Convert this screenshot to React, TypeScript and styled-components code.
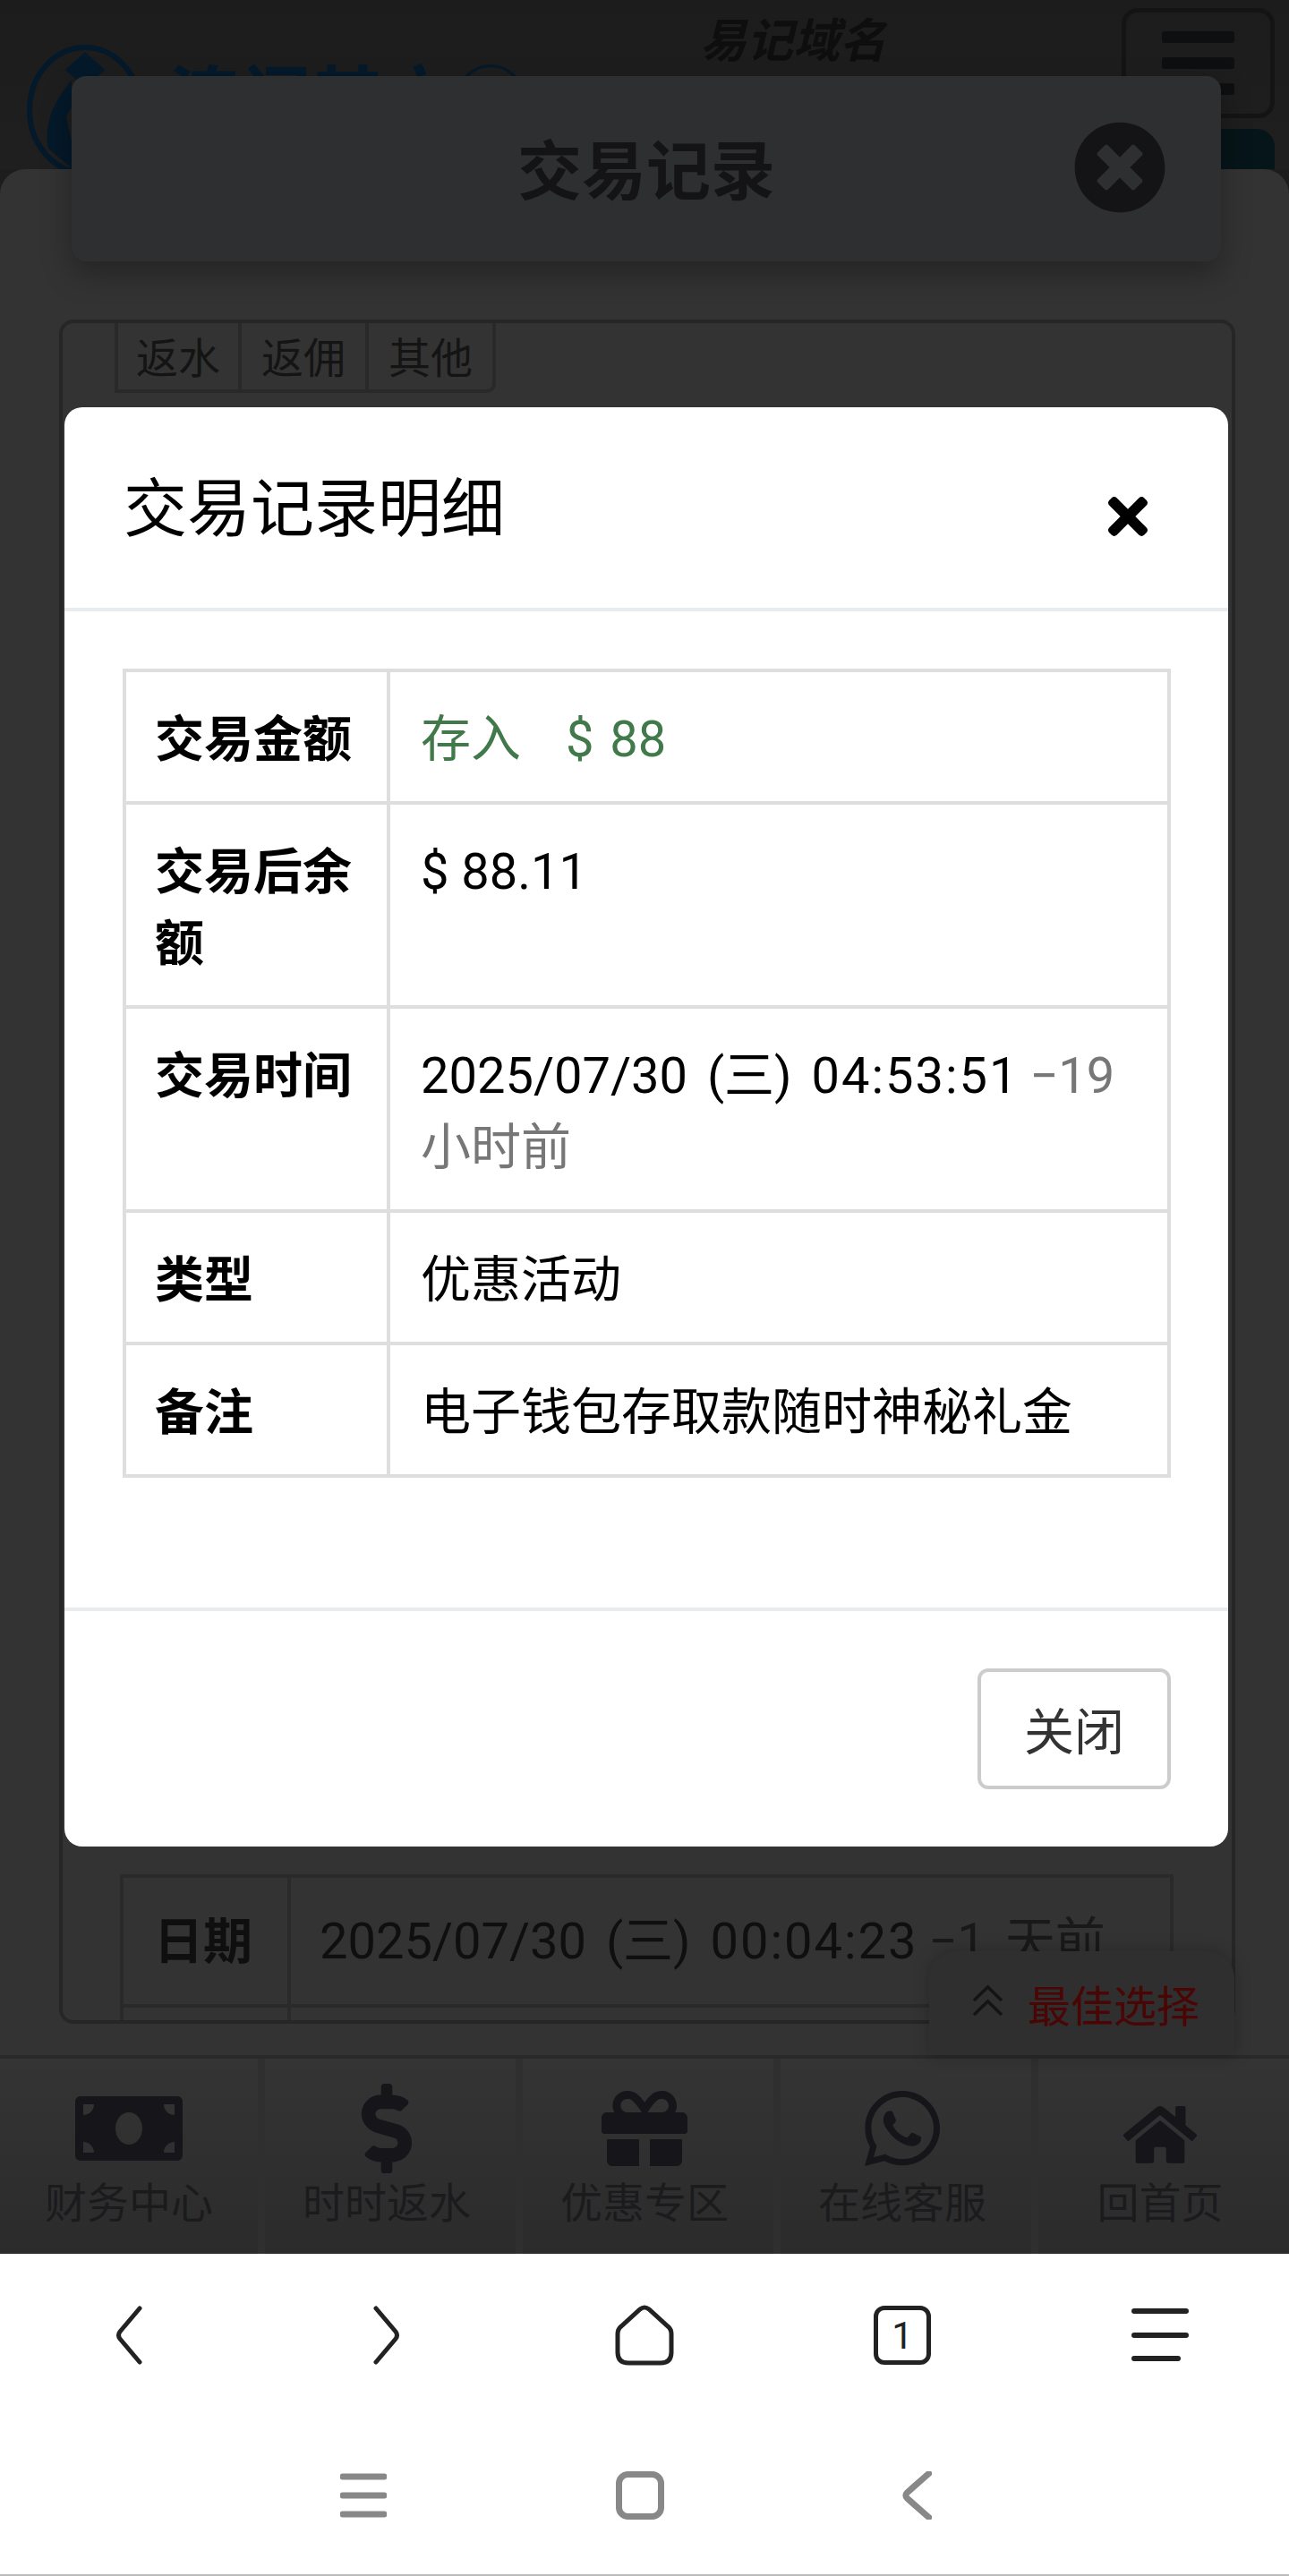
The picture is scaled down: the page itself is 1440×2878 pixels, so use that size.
import * as React from 'react'

import styled, { createGlobalStyle } from 'styled-components'
import { FaDollarSign, FaGift, FaHome, FaMoneyBill, FaTimes, FaTimesCircle, FaWhatsapp } from 'react-icons/fa'

const GlobalStyle = createGlobalStyle`
  html, body {
    margin: 0;
    padding: 0;
    background: #fff;
  }
  body {
    font-family: Roboto, "Noto Sans CJK SC", sans-serif;
  }
  * {
    box-sizing: border-box;
  }
`

const Screen = styled.div`
  width: 1440px;
  height: 2878px;
  display: flex;
  flex-direction: column;
  overflow: hidden;
`

const PageArea = styled.div`
  position: relative;
  height: 2518px;
  flex: none;
  display: flex;
  flex-direction: column;
  overflow: hidden;
  background: #1d1d1d;
`

const Header = styled.header`
  height: 189px;
  flex: none;
  display: flex;
  padding: 9px 16px 0 30px;
  overflow: hidden;
  background: linear-gradient(#1c1c1c, #1f1f1f);
`

const LogoBlock = styled.div`
  width: 752px;
  display: flex;
  align-items: flex-start;
  gap: 28px;
  padding-top: 39px;
`

const LogoText = styled.span`
  margin-top: 20px;
  font-size: 80px;
  line-height: 90px;
  font-weight: 700;
  color: #04192a;
  white-space: nowrap;
`

const SiteTitle = styled.h1`
  width: 471px;
  margin: 8px 0 0;
  font-size: 52px;
  line-height: 60px;
  font-weight: 700;
  font-style: italic;
  color: #0e0e0e;
`

const HeaderRight = styled.div`
  width: 171px;
  display: flex;
  flex-direction: column;
  gap: 12px;
`

const MenuButton = styled.button`
  width: 171px;
  height: 123px;
  flex: none;
  padding: 21px 40px;
  display: flex;
  flex-direction: column;
  justify-content: space-between;
  border: 5px solid #141414;
  border-radius: 18px;
  background: transparent;
`

const MenuBar = styled.span`
  height: 13px;
  width: 100%;
  border-radius: 3px;
  background: #0d0f11;
`

const TealButton = styled.div`
  height: 80px;
  flex: none;
  border-radius: 20px 20px 0 0;
  background: #061519;
`

const Card = styled.main`
  position: relative;
  flex: 1;
  min-height: 0;
  display: flex;
  flex-direction: column;
  padding: 168px 60px 35px 66px;
  border-radius: 28px 28px 0 0;
  background: #333;
`

const RecordBox = styled.section`
  flex: 1;
  min-height: 0;
  padding-left: 58px;
  overflow: hidden;
  border: 4px solid #262626;
  border-radius: 16px;
`

const Tabs = styled.div`
  display: flex;
  width: max-content;
`

const Tab = styled.div`
  width: 142px;
  height: 78px;
  display: flex;
  align-items: center;
  justify-content: center;
  padding-bottom: 3px;
  font-size: 47px;
  color: #141414;
  border: 4px solid #292929;
  border-left-width: 0;
  border-top-width: 0;

  &:first-child {
    border-left-width: 4px;
  }
  &:last-child {
    border-bottom-right-radius: 10px;
  }
`

const SummaryTable = styled.table`
  width: 1177px;
  margin: 1655px 0 0 6px;
  table-layout: fixed;
  border-collapse: collapse;
  font-size: 56px;
  line-height: 80px;
  color: #0f0f0f;

  tr {
    height: 145px;
  }
  th, td {
    border: 4px solid #2a2a2a;
    padding: 0 32px;
    text-align: left;
    white-space: nowrap;
  }
  th {
    width: 187px;
    padding: 0 34px;
    font-size: 55px;
  }
`

// dates and times run wider than the table's own text
const DateText = styled.span`
  word-spacing: 8px;
`

const TimeText = styled.span`
  letter-spacing: 2px;
`

const Ago = styled.span<{ $color: string }>`
  margin-left: -10px;
  color: ${p => p.$color};
`

const BestChoice = styled.div`
  position: absolute;
  right: 61px;
  bottom: 0;
  width: 341px;
  height: 116px;
  display: flex;
  align-items: flex-start;
  padding: 30px 0 0 47px;
  gap: 26px;
  border-radius: 30px 30px 0 0;
  background: #2f2f2f;
  box-shadow: 0 0 18px rgba(0, 0, 0, .25);
  color: #141414;

  svg {
    margin-top: 7px;
  }
`

const BestChoiceLabel = styled.span`
  font-size: 48px;
  line-height: 66px;
  color: #4a0505;
`

const BottomNav = styled.nav`
  height: 222px;
  flex: none;
  display: grid;
  grid-template-columns: repeat(5, 1fr);
  border-top: 4px solid #292929;
  background: linear-gradient(#343434, #2b2b2b);
`

const NavItem = styled.a`
  display: flex;
  flex-direction: column;
  align-items: center;
  padding-top: 28px;
  color: #16161a;
  box-shadow: 8px 0 0 #2f2f2f;

  &:last-child {
    box-shadow: none;
  }
`

const NavIcon = styled.span<{ $drop?: number }>`
  height: 100px;
  display: flex;
  align-items: center;
  justify-content: center;
  padding-top: ${p => p.$drop || 0}px;
`

const NavLabel = styled.span`
  margin-top: 4px;
  font-size: 47px;
  line-height: 60px;
  color: #1b1b1d;
`

const Toolbar = styled.div`
  position: absolute;
  top: 85px;
  left: 80px;
  width: 1284px;
  height: 207px;
  display: flex;
  align-items: center;
  justify-content: center;
  padding-bottom: 6px;
  border-radius: 16px;
  background: #2e2f31;
  box-shadow: 0 14px 34px rgba(0, 0, 0, .3);
`

const ToolbarTitle = styled.h2`
  margin: 0;
  font-size: 72px;
  font-weight: 700;
  color: #141416;
`

const ToolbarClose = styled.span`
  position: absolute;
  right: 61px;
  top: 50px;
  display: flex;
  color: #141416;
`

const Modal = styled.div`
  position: absolute;
  top: 455px;
  left: 72px;
  width: 1300px;
  height: 1608px;
  border-radius: 20px;
  background: #fff;
  color: #000;
`

const ModalHeader = styled.div`
  height: 228px;
  display: flex;
  justify-content: space-between;
  padding: 61px 80px 0 66px;
  border-bottom: 4px solid #e9ecef;
`

const ModalTitle = styled.h3`
  margin: 0;
  font-size: 71px;
  line-height: 105px;
  font-weight: 400;
`

const ModalClose = styled.span`
  display: flex;
  height: 64px;
  margin-top: 29px;
`

const ModalBody = styled.div`
  height: 1113px;
  padding: 64px 64px 0 65px;
`

const DetailTable = styled.table`
  width: 100%;
  table-layout: fixed;
  border-collapse: collapse;
  font-size: 56px;
  line-height: 80px;

  th, td {
    border: 4px solid #dedede;
    padding: 35px 32px 29px 34px;
    text-align: left;
    vertical-align: top;
  }
  th {
    width: 295px;
    padding-left: 32px;
    font-weight: 700;
    font-size: 55px;
  }
`

const AmountValue = styled.span`
  color: #41794a;

  span {
    margin-left: 50px;
    word-spacing: 4px;
  }
`

const ModalFooter = styled.div`
  height: 267px;
  display: flex;
  justify-content: flex-end;
  padding: 64px 64px 0 0;
  border-top: 4px solid #e9ecef;
`

const CloseButton = styled.button`
  width: 216px;
  height: 135px;
  padding-bottom: 4px;
  border: 4px solid #ccc;
  border-radius: 12px;
  background: #fff;
  font: inherit;
  font-size: 56px;
  color: #333;
`

const BrowserBar = styled.div`
  height: 182px;
  flex: none;
  display: grid;
  grid-template-columns: repeat(5, 288px);
  align-items: center;
  justify-items: center;
  background: #fff;
  color: #222;
`

const TabCount = styled.div`
  position: relative;
  width: 64px;
  height: 66px;
  display: flex;
  align-items: center;
  justify-content: center;
  border: 5px solid #222;
  border-radius: 12px;
  font-size: 42px;
  font-weight: 400;
`

const SystemBar = styled.div`
  flex: 1;
  display: flex;
  align-items: center;
  padding-left: 380px;
  gap: 256px;
  border-bottom: 2px solid #bbb;
  background: #fff;
  color: #888;
`

const SystemBack = styled.span`
  display: flex;
  margin-left: 10px;
`

const navItems = [
  { label: '财务中心', icon: <FaMoneyBill size={120} /> },
  { label: '时时返水', icon: <FaDollarSign size={100} /> },
  { label: '优惠专区', icon: <FaGift size={96} /> },
  { label: '在线客服', icon: <FaWhatsapp size={96} /> },
  { label: '回首页', icon: <FaHome size={82} />, drop: 14 },
]

function LogoMark() {
  return (
    <svg width="130" height="150" viewBox="0 0 130 150" fill="none">
      <ellipse cx="65" cy="75" rx="62" ry="70" stroke="#04192a" strokeWidth="6" />
      <path d="M65 10 L87 30 L65 50 L43 30 Z" fill="#04192a" />
      <path d="M50 42 C32 62 18 90 24 118 L50 140 L50 110 L44 82 L50 72 Z" fill="#04192a" />
    </svg>
  )
}

function DoubleUp() {
  return (
    <svg width="37" height="36" viewBox="0 0 37 36" fill="none">
      <path d="M3 18 L18.5 3 L34 18 M3 34 L18.5 19 L34 34" stroke="currentColor" strokeWidth="3.5" />
    </svg>
  )
}

function ChevronLeft({ width, height, weight }: { width: number; height: number; weight: number }) {
  return (
    <svg width={width} height={height} viewBox="0 0 30 66" fill="none" preserveAspectRatio="none">
      <path
        d="M27 3 L5 29 Q2 33 5 37 L27 63"
        stroke="currentColor"
        strokeWidth={weight}
        strokeLinecap="round"
        vectorEffect="non-scaling-stroke"
      />
    </svg>
  )
}

function ChevronRight() {
  return (
    <svg width="30" height="66" viewBox="0 0 30 66" fill="none">
      <path d="M3 3 L25 29 Q28 33 25 37 L3 63" stroke="currentColor" strokeWidth="5" strokeLinecap="round" />
    </svg>
  )
}

function HomeOutline() {
  return (
    <svg width="66" height="68" viewBox="0 0 66 68" fill="none">
      <path
        d="M28 5 Q33 1 38 5 L59 24 Q63 27 63 33 L63 53 Q63 65 51 65 L15 65 Q3 65 3 53 L3 33 Q3 27 7 24 Z"
        stroke="currentColor"
        strokeWidth="5"
      />
    </svg>
  )
}

function MenuLines() {
  return (
    <svg width="64" height="62" viewBox="0 0 64 62" fill="none">
      <path d="M3 4 H61 M3 31 H61 M3 57 H52" stroke="currentColor" strokeWidth="6" strokeLinecap="round" />
    </svg>
  )
}

function SystemMenu() {
  return (
    <svg width="52" height="50" viewBox="0 0 52 50" fill="none">
      <path d="M3 4 H49 M3 25 H49 M3 46 H49" stroke="currentColor" strokeWidth="7" strokeLinecap="round" />
    </svg>
  )
}

function SystemSquare() {
  return (
    <svg width="54" height="54" viewBox="0 0 54 54" fill="none">
      <rect x="3.5" y="3.5" width="47" height="47" rx="10" stroke="currentColor" strokeWidth="7" />
    </svg>
  )
}

export default function App() {
  return (
    <Screen>
      <GlobalStyle />
      <PageArea>
        <Header>
          <LogoBlock>
            <LogoMark />
            <LogoText>澳门其方㊣</LogoText>
          </LogoBlock>
          <SiteTitle>易记域名</SiteTitle>
          <HeaderRight>
            <MenuButton>
              <MenuBar />
              <MenuBar />
              <MenuBar />
            </MenuButton>
            <TealButton />
          </HeaderRight>
        </Header>

        <Card>
          <RecordBox>
            <Tabs>
              <Tab>返水</Tab>
              <Tab>返佣</Tab>
              <Tab>其他</Tab>
            </Tabs>
            <SummaryTable>
              <tbody>
                <tr>
                  <th>日期</th>
                  <td>
                    <DateText>
                      2025/07/30 (三) <TimeText>00:04:23</TimeText> <Ago $color="#191919">−1 天前</Ago>
                    </DateText>
                  </td>
                </tr>
                <tr>
                  <th />
                  <td />
                </tr>
              </tbody>
            </SummaryTable>
          </RecordBox>
          <BestChoice>
            <DoubleUp />
            <BestChoiceLabel>最佳选择</BestChoiceLabel>
          </BestChoice>
        </Card>

        <BottomNav>
          {navItems.map(item => (
            <NavItem key={item.label}>
              <NavIcon $drop={item.drop}>{item.icon}</NavIcon>
              <NavLabel>{item.label}</NavLabel>
            </NavItem>
          ))}
        </BottomNav>

        <Toolbar>
          <ToolbarTitle>交易记录</ToolbarTitle>
          <ToolbarClose>
            <FaTimesCircle size={104} />
          </ToolbarClose>
        </Toolbar>

        <Modal>
          <ModalHeader>
            <ModalTitle>交易记录明细</ModalTitle>
            <ModalClose>
              <FaTimes size={64} />
            </ModalClose>
          </ModalHeader>
          <ModalBody>
            <DetailTable>
              <tbody>
                <tr>
                  <th>交易金额</th>
                  <td>
                    <AmountValue>
                      存入<span>$ 88</span>
                    </AmountValue>
                  </td>
                </tr>
                <tr>
                  <th>交易后余额</th>
                  <td>$ 88.11</td>
                </tr>
                <tr>
                  <th>交易时间</th>
                  <td>
                    <DateText>
                      2025/07/30 (三) <TimeText>04:53:51</TimeText> <Ago $color="#777">−19 小时前</Ago>
                    </DateText>
                  </td>
                </tr>
                <tr>
                  <th>类型</th>
                  <td>优惠活动</td>
                </tr>
                <tr>
                  <th>备注</th>
                  <td>电子钱包存取款随时神秘礼金</td>
                </tr>
              </tbody>
            </DetailTable>
          </ModalBody>
          <ModalFooter>
            <CloseButton>关闭</CloseButton>
          </ModalFooter>
        </Modal>
      </PageArea>

      <BrowserBar>
        <ChevronLeft width={30} height={66} weight={5} />
        <ChevronRight />
        <HomeOutline />
        <TabCount>1</TabCount>
        <MenuLines />
      </BrowserBar>

      <SystemBar>
        <SystemMenu />
        <SystemSquare />
        <SystemBack>
          <ChevronLeft width={33} height={54} weight={7} />
        </SystemBack>
      </SystemBar>
    </Screen>
  )
}
